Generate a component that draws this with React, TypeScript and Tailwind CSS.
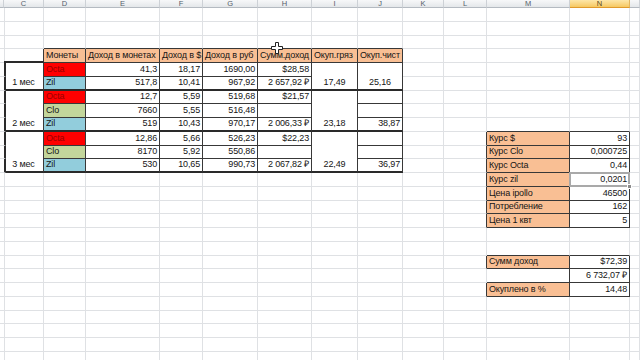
import React from 'react';
import clsx from 'clsx';

type Line = 'g' | 't' | 'm';

interface Cell {
  text?: string;
  align?: 'l' | 'c' | 'r';
  fill?: string;
  r?: Line;
  b?: Line;
  span?: 2 | 3;
  skip?: boolean;
  active?: boolean;
}

const COLS = ['', 'C', 'D', 'E', 'F', 'G', 'H', 'I', 'J', 'K', 'L', 'M', 'N', ''];
const ROWS = 26;

const RIGHT: Record<Line, string> = {
  g: 'border-r border-r-[#dfe1e4]',
  t: 'border-r border-r-[#383838]',
  m: 'border-r-2 border-r-[#2a2a2a]',
};

const BOTTOM: Record<Line, string> = {
  g: 'border-b border-b-[#dfe1e4]',
  t: 'border-b border-b-[#383838]',
  m: 'border-b-2 border-b-[#2a2a2a]',
};

const ALIGN = { l: 'justify-start', c: 'justify-center', r: 'justify-end' };
const SPAN = { 2: 'row-span-2', 3: 'row-span-3' };

const ORANGE = 'bg-[#f9bf94]';
const COIN_FILL: Record<string, string> = {
  Octa: 'bg-[#ff0000] text-[#9a0000]',
  Clo: 'bg-[#c3d69b]',
  Zil: 'bg-[#92cddc]',
};

const groups = [
  {
    label: '1 мес',
    start: 4,
    rows: [
      ['Octa', '41,3', '18,17', '1690,00', '$28,58'],
      ['Zil', '517,8', '10,41', '967,92', '2 657,92 ₽'],
    ],
    gross: '17,49',
    net: '25,16',
    netMerged: true,
  },
  {
    label: '2 мес',
    start: 6,
    rows: [
      ['Octa', '12,7', '5,59', '519,68', '$21,57'],
      ['Clo', '7660', '5,55', '516,48', ''],
      ['Zil', '519', '10,43', '970,17', '2 006,33 ₽'],
    ],
    gross: '23,18',
    net: '38,87',
    netMerged: false,
  },
  {
    label: '3 мес',
    start: 9,
    rows: [
      ['Octa', '12,86', '5,66', '526,23', '$22,23'],
      ['Clo', '8170', '5,92', '550,86', ''],
      ['Zil', '530', '10,65', '990,73', '2 067,82 ₽'],
    ],
    gross: '22,49',
    net: '36,97',
    netMerged: false,
  },
];

const rates = [
  ['Курс $', '93'],
  ['Курс Clo', '0,000725'],
  ['Курс Octa', '0,44'],
  ['Курс zil', '0,0201'],
  ['Цена ipollo', '46500'],
  ['Потребление', '162'],
  ['Цена 1 квт', '5'],
];

const summary = [
  ['Сумм доход', '$72,39'],
  ['', '6 732,07 ₽'],
  ['Окуплено в %', '14,48'],
];

function buildSheet() {
  const grid: Cell[][] = Array.from({ length: ROWS }, () => COLS.map(() => ({})));
  const set = (r: number, c: number, cell: Cell) => Object.assign(grid[r][c], cell);

  // income table header
  const heads = ['Монеты', 'Доход в монетах', 'Доход в $', 'Доход в руб', 'Сумм.доход', 'Окуп.гряз', 'Окуп.чист'];
  heads.forEach((h, i) => {
    set(2, i + 2, { b: 't' });
    set(3, i + 2, { text: h, fill: ORANGE, r: 't', b: 't' });
  });
  set(3, 1, { r: 't', b: 'm' });

  groups.forEach((g) => {
    const last = g.start + g.rows.length - 1;
    const span = g.rows.length as 2 | 3;
    g.rows.forEach((row, k) => {
      const r = g.start + k;
      const edge: Line = r === last ? 'm' : 't';
      set(r, 0, { r: 'm' });
      row.forEach((text, i) =>
        set(r, i + 2, { text, align: i ? 'r' : 'l', fill: i ? undefined : COIN_FILL[text], r: 't', b: edge })
      );
      if (k > 0) {
        set(r, 1, { skip: true });
        set(r, 7, { skip: true });
        if (g.netMerged) set(r, 8, { skip: true });
      }
      if (!g.netMerged) set(r, 8, { text: r === last ? g.net : '', align: 'r', r: 't', b: edge });
    });
    set(g.start, 1, { text: g.label, align: 'c', span, r: 't', b: 'm' });
    set(g.start, 7, { text: g.gross, align: 'c', span, r: 't', b: 'm' });
    if (g.netMerged) set(g.start, 8, { text: g.net, align: 'c', span, r: 't', b: 'm' });
  });

  // rates table
  set(8, 11, { b: 't' });
  set(8, 12, { b: 't' });
  rates.forEach(([k, v], i) => {
    const r = 9 + i;
    set(r, 10, { r: 't' });
    set(r, 11, { text: k, fill: ORANGE, r: 't', b: 't' });
    set(r, 12, { text: v, align: 'r', r: 't', b: 't', active: k === 'Курс zil' });
  });

  // totals
  set(17, 11, { b: 't' });
  set(17, 12, { b: 't' });
  summary.forEach(([k, v], i) => {
    const r = 18 + i;
    if (k) set(r, 10, { r: 't' });
    set(r, 11, { text: k, fill: k ? ORANGE : undefined, r: 't', b: 't' });
    set(r, 12, { text: v, align: 'r', r: 't', b: 't' });
  });

  return grid;
}

function MoveCursor() {
  return (
    <svg className="absolute left-[271px] top-[42px] z-20" width="12" height="12" viewBox="0 0 12 12">
      <path
        d="M4.5 0.5h3v4h4v3h-4v4h-3v-4h-4v-3h4z"
        fill="#fff"
        stroke="#222"
        strokeWidth="1"
      />
    </svg>
  );
}

export default function App() {
  const sheet = buildSheet();

  return (
    <div className="relative h-[360px] w-[640px] overflow-hidden bg-white font-['Liberation_Sans',sans-serif] text-[9px] tracking-[-0.15px] text-[#151515]">
      <div className="grid grid-cols-[4px_40px_42px_74px_43px_55px_54px_46px_45px_41px_43px_83px_60px_10px] grid-rows-[8px_repeat(26,13.75px)]">
        {COLS.map((label, i) => (
          <div
            key={'h' + i}
            className={clsx(
              'flex items-center justify-center overflow-hidden border-r border-b bg-gradient-to-b text-[7.5px] leading-none',
              label === 'N'
                ? 'border-r-[#e2b560] border-b-[#e09a2c] from-[#fde7a8] to-[#f6c860] text-[#5a4a20]'
                : 'border-r-[#cdd1d6] border-b-[#b4bac1] from-[#f7f8f9] to-[#e4e7ea] text-[#55606b]'
            )}
          >
            {label}
          </div>
        ))}

        {sheet.map((row, r) =>
          row.map((cell, c) =>
            cell.skip ? null : (
              <div
                key={r + '-' + c}
                className={clsx(
                  'flex items-end whitespace-nowrap px-[2px] pb-[1px] leading-[11px]',
                  cell.active ? 'relative z-10' : 'overflow-hidden',
                  ALIGN[cell.align ?? 'l'],
                  cell.fill,
                  RIGHT[cell.r ?? 'g'],
                  BOTTOM[cell.b ?? 'g'],
                  cell.span && SPAN[cell.span]
                )}
              >
                {cell.text}
                {cell.active && (
                  <>
                    <span className="absolute -left-px -top-px h-[calc(100%+2px)] w-[calc(100%+2px)] border-2 border-[#a9a9a9]" />
                    <span className="absolute -bottom-[3px] -right-[3px] size-[5px] border border-white bg-[#8c8c8c]" />
                  </>
                )}
              </div>
            )
          )
        )}
      </div>
      <MoveCursor />
    </div>
  );
}
